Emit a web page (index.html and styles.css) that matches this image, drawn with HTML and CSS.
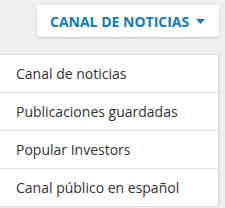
FILE: index.html
```html
<!DOCTYPE html>
<html lang="es">
<head>
<meta charset="utf-8">
<link rel="stylesheet" href="styles.css">
</head>
<body>
<div class="page">
  <div class="bar">
    <button class="feed-btn" type="button">
      <span class="feed-label">CANAL DE NOTICIAS</span>
      <svg class="caret" width="9" height="5" viewBox="0 0 9 5"><path d="M0 0H9L4.5 5Z" fill="#0e7bc2"/></svg>
    </button>
  </div>
  <ul class="menu">
    <li class="menu-item">Canal de noticias</li>
    <li class="menu-item">Publicaciones guardadas</li>
    <li class="menu-item">Popular Investors</li>
    <li class="menu-item">Canal público en español</li>
  </ul>
</div>
</body>
</html>
```
FILE: styles.css
```css
html, body {
  margin: 0;
  padding: 0;
  background: #eeeeee;
  font-family: "Open Sans", "Liberation Sans", sans-serif;
}
.page {
  width: 225px;
  height: 208px;
  overflow: hidden;
}
.bar {
  display: flex;
  justify-content: flex-end;
  padding: 5px 6px 0 0;
}
.feed-btn {
  display: flex;
  align-items: center;
  gap: 7px;
  height: 32px;
  width: 182px;
  padding: 0 0 0 13px;
  border: none;
  border-radius: 3px;
  background: #ffffff;
  box-shadow: 0 1px 2px rgba(0, 0, 0, 0.18);
  font-family: inherit;
  cursor: pointer;
}
.feed-label {
  font-size: 14px;
  font-weight: 700;
  color: #0e7bc2;
  letter-spacing: 0;
}
.caret {
  display: block;
  margin-top: 1px;
}
.menu {
  list-style: none;
  margin: 17px 5px 0 -10px;
  padding: 0;
  background: #ffffff;
  border: 1px solid #dedede;
  border-right-width: 2px;
}
.menu-item {
  height: 37px;
  display: flex;
  align-items: center;
  padding-left: 25px;
  font-size: 14px;
  color: #333333;
  border-bottom: 1px solid #e0e0e0;
}
.menu-item:last-child {
  border-bottom: none;
}
```
